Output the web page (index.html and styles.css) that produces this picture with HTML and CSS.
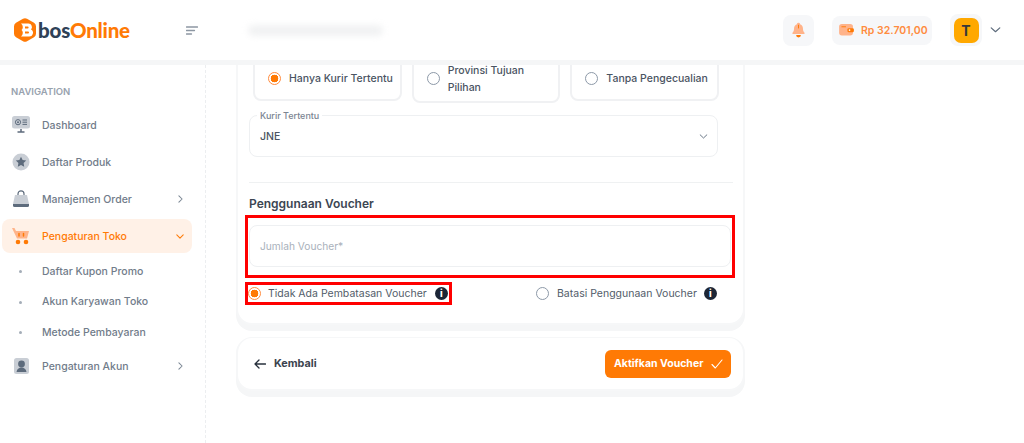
FILE: index.html
```html
<!DOCTYPE html>
<html lang="id">
<head>
<meta charset="utf-8">
<title>bosOnline</title>
<link rel="stylesheet" href="styles.css">
</head>
<body>
<header class="topbar">
  <div class="brand">
    <svg class="brand-mark" viewBox="0 0 22 24" width="22" height="24"><path d="M9 .8a4 4 0 0 1 4 0l7 4a4 4 0 0 1 2 3.400v7.600a4 4 0 0 1-2 3.400l-7 4a4 4 0 0 1-4 0l-7-4a4 4 0 0 1-2-3.400V8.200a4 4 0 0 1 2-3.400z" fill="#ff7a05"/><path fill-rule="evenodd" d="M7 5.500h7.500a3.500 3.500 0 0 1 2.500 5.900 3.800 3.800 0 0 1-2.300 7.100H7a4.500 4.500 0 0 0 1.800-3.500c0-1.200-.5-2.300-1.300-3 .8-.7 1.300-1.800 1.300-3A4.500 4.500 0 0 0 7 5.500zM11 8.500v2h2.600a1 1 0 0 0 0-2zM11 13.500v2h3a1 1 0 0 0 0-2z" fill="#fff"/></svg>
    <span class="brand-name"><span class="brand-dark">bos</span>Online</span>
  </div>
  <svg class="menu-icon" viewBox="0 0 12 9" width="12" height="9"><path d="M.5 1h11M.5 4.500h8M.5 8h5" stroke="#8d97a3" stroke-width="1.300" stroke-linecap="round"/></svg>
  <div class="redacted"></div>
  <div class="top-actions">
    <div class="tile bell">
      <svg viewBox="0 0 16 20" width="13" height="16"><path d="M8 1a2 2 0 0 1 2 1.700c2.500.8 3.600 3 3.600 5.600 0 2.700 1 4 2 5.200.5.700 0 1.500-.8 1.500H1.200c-.8 0-1.300-.8-.8-1.500 1-1.200 2-2.500 2-5.200 0-2.600 1.100-4.800 3.600-5.600A2 2 0 0 1 8 1z" fill="#ffb38a"/><path d="M5 16.300h6a3 3 0 0 1-6 0z" fill="#ff7a05"/><path d="M8 4v3.500" stroke="#ff7a05" stroke-width="1.200" stroke-linecap="round"/></svg>
    </div>
    <div class="wallet">
      <svg viewBox="0 0 16 13" width="15" height="12"><rect x="0" y="0" width="15" height="12.500" rx="3" fill="#ffb38a"/><rect x="9" y="4.500" width="7" height="4.500" rx="1.500" fill="#ff7a05"/><circle cx="11.300" cy="6.700" r=".9" fill="#fff"/><path d="M3 3h4" stroke="#ff7a05" stroke-width="1" stroke-linecap="round"/></svg>
      <span>Rp 32.701,00</span>
    </div>
    <div class="avatar-tile"><div class="avatar">T</div></div>
    <svg class="caret" viewBox="0 0 12 7" width="11" height="6"><path d="M1 1l5 4.500L11 1" fill="none" stroke="#5d6b7c" stroke-width="1.400" stroke-linecap="round" stroke-linejoin="round"/></svg>
  </div>
</header>

<div class="layout">
  <aside class="sidebar">
    <div class="nav-title">NAVIGATION</div>
    <nav class="nav">
      <a class="nav-item">
        <svg viewBox="0 0 18 18" width="18" height="18"><rect x="0" y="0" width="18" height="12.500" rx="2.500" fill="#c9ced5"/><circle cx="6" cy="6.200" r="2.600" fill="none" stroke="#5d6b7c" stroke-width="1"/><circle cx="6" cy="6.200" r="1" fill="#5d6b7c"/><path d="M10.500 4h4.500M10.500 6.200h4.500M10.500 8.400h4.500" stroke="#5d6b7c" stroke-width="1"/><path d="M9 13v2.500M5.500 16h7" stroke="#5d6b7c" stroke-width="1.500"/></svg>
        <span>Dashboard</span>
      </a>
      <a class="nav-item">
        <svg viewBox="0 0 18 18" width="18" height="18"><circle cx="9" cy="9" r="8.500" fill="#c9ced5"/><path d="M9 3.800l1.600 3.300 3.600.5-2.600 2.500.6 3.600L9 12l-3.200 1.700.6-3.600-2.600-2.500 3.600-.5z" fill="#5d6b7c"/></svg>
        <span>Daftar Produk</span>
      </a>
      <a class="nav-item">
        <svg viewBox="0 0 18 18" width="18" height="18"><path d="M6 6V3.800a3 3 0 0 1 6 0V6" fill="none" stroke="#5d6b7c" stroke-width="1.200"/><path d="M3 5h12l2 9H1z" fill="#c9ced5"/><path d="M1 14h16v1.500a1.500 1.500 0 0 1-1.500 1.500h-13A1.500 1.500 0 0 1 1 15.500z" fill="#5d6b7c"/></svg>
        <span>Manajemen Order</span>
        <svg class="nav-caret" viewBox="0 0 6 10" width="5" height="8"><path d="M1 1l4 4-4 4" fill="none" stroke="#7b8794" stroke-width="1.300" stroke-linecap="round" stroke-linejoin="round"/></svg>
      </a>
      <a class="nav-item active">
        <svg viewBox="0 0 18 18" width="18" height="18"><path d="M0 1h2.500l1.500 3h13l-2 7.500H5z" fill="#ffb48a"/><path d="M7 6.500v2.500M11.500 6.500v2.500" stroke="#ff7a05" stroke-width="1.500" stroke-linecap="round"/><circle cx="6" cy="15" r="2.300" fill="#ff7a05"/><circle cx="14" cy="15" r="2.300" fill="#ff7a05"/></svg>
        <span>Pengaturan Toko</span>
        <svg class="nav-caret wide" viewBox="0 0 10 6" width="8" height="5"><path d="M1 1l4 4 4-4" fill="none" stroke="#ff7a05" stroke-width="1.300" stroke-linecap="round" stroke-linejoin="round"/></svg>
      </a>
      <div class="subnav">
        <a class="sub-item">Daftar Kupon Promo</a>
        <a class="sub-item">Akun Karyawan Toko</a>
        <a class="sub-item">Metode Pembayaran</a>
      </div>
      <a class="nav-item">
        <svg viewBox="0 0 18 18" width="18" height="18"><rect x="2" y="1" width="15" height="16" rx="2.500" fill="#c9ced5"/><circle cx="9.500" cy="7" r="3.400" fill="#5d6b7c"/><path d="M4.500 15c.4-3 2.400-4.500 5-4.500s4.600 1.500 5 4.500z" fill="#5d6b7c"/></svg>
        <span>Pengaturan Akun</span>
        <svg class="nav-caret" viewBox="0 0 6 10" width="5" height="8"><path d="M1 1l4 4-4 4" fill="none" stroke="#7b8794" stroke-width="1.300" stroke-linecap="round" stroke-linejoin="round"/></svg>
      </a>
    </nav>
  </aside>

  <main class="main">
    <section class="card form-card">
      <div class="option-row">
        <div class="option"><span class="radio on"></span><span>Hanya Kurir Tertentu</span></div>
        <div class="option tall"><span class="radio"></span><span>Provinsi Tujuan Pilihan</span></div>
        <div class="option"><span class="radio"></span><span>Tanpa Pengecualian</span></div>
      </div>
      <div class="field select-field">
        <span class="field-label">Kurir Tertentu</span>
        <span>JNE</span>
        <svg viewBox="0 0 10 6" width="9" height="5"><path d="M1 1l4 3.800L9 1" fill="none" stroke="#5d6b7c" stroke-width="1.100" stroke-linecap="round" stroke-linejoin="round"/></svg>
      </div>
      <hr class="divider">
      <h2 class="section-title">Penggunaan Voucher</h2>
      <div class="mark mark-input">
        <div class="field input-field">Jumlah Voucher*</div>
      </div>
      <div class="limit-row">
        <div class="mark mark-radio">
          <span class="radio on"></span>
          <span>Tidak Ada Pembatasan Voucher</span>
          <span class="info">i</span>
        </div>
        <div class="limit-option">
          <span class="radio"></span>
          <span>Batasi Penggunaan Voucher</span>
          <span class="info">i</span>
        </div>
      </div>
    </section>
    <section class="card action-card">
      <a class="back">
        <svg viewBox="0 0 12 10" width="12" height="10"><path d="M11.500 5H1M5 1L1 5l4 4" fill="none" stroke="#27303c" stroke-width="1.300" stroke-linecap="round" stroke-linejoin="round"/></svg>
        <span>Kembali</span>
      </a>
      <button class="submit" type="button">
        <span>Aktifkan Voucher</span>
        <svg viewBox="0 0 12 10" width="12" height="10"><path d="M1 5.500L4.300 9 11 1" fill="none" stroke="#fff" stroke-width="1.100" stroke-linecap="round" stroke-linejoin="round"/></svg>
      </button>
    </section>
  </main>
</div>
</body>
</html>
```

FILE: styles.css
```css
* { box-sizing: border-box; }
html, body { height: 100%; }
body {
  margin: 0;
  height: 443px;
  overflow: hidden;
  background: #fff;
  color: #46505d;
  font-family: Inter, "Liberation Sans", sans-serif;
  font-size: 10.500px;
}
.topbar {
  position: relative;
  z-index: 2;
  display: flex;
  align-items: center;
  height: 65px;
  padding: 0 23px 0 14px;
  background: #fff;
  border-bottom: 5px solid #f5f6f7;
}
.brand { display: flex; align-items: center; gap: 2px; width: 172px; }
.brand-mark { flex: none; }
.brand-name {
  font-family: Lato, Inter, sans-serif;
  font-size: 20.500px;
  font-weight: 900;
  letter-spacing: -.2px;
  color: #ff7a05;
}
.brand-dark { color: #2f4257; }
.menu-icon { flex: none; }
.redacted {
  width: 135px;
  height: 11px;
  margin-left: 50px;
  background: #f1f2f3;
  border-radius: 6px;
  filter: blur(3px);
}
.top-actions { display: flex; align-items: center; margin-left: auto; }
.tile {
  display: flex;
  align-items: center;
  justify-content: center;
  width: 31px;
  height: 31px;
  border-radius: 8px;
  background: #f6f7f9;
}
.wallet {
  display: flex;
  align-items: center;
  gap: 7px;
  width: 100px;
  height: 29px;
  margin-left: 18px;
  padding-left: 7px;
  border-radius: 8px;
  background: #f6f7f9;
  color: #ff8c3f;
  font-size: 10.500px;
  font-weight: 600;
  white-space: nowrap;
}
.avatar-tile {
  display: flex;
  align-items: center;
  justify-content: center;
  width: 32px;
  height: 32px;
  margin-left: 18px;
  border-radius: 8px;
  background: #f6f7f9;
}
.avatar {
  display: flex;
  align-items: center;
  justify-content: center;
  width: 25px;
  height: 25px;
  border-radius: 7px;
  background: #ffa800;
  color: #38383a;
  font-size: 14px;
  font-weight: 700;
}
.caret { margin-left: 8px; }

.layout { display: flex; height: 378px; }
.sidebar {
  flex: none;
  width: 206px;
  padding-top: 20px;
  border-right: 1px dashed #eceef0;
}
.nav-title {
  height: 13px;
  padding-left: 11px;
  line-height: 13px;
  color: #98a2ae;
  font-size: 9.500px;
  font-weight: 600;
}
.nav { display: flex; flex-direction: column; margin-top: 10px; padding: 0 13px 0 2px; }
.nav-item {
  display: flex;
  align-items: center;
  height: 34px;
  margin-bottom: 3px;
  padding: 0 8px 0 10px;
  border-radius: 8px;
  color: #717c8a;
  font-weight: 500;
}
.nav-item > span { margin-left: 12px; }
.nav-caret { margin-left: auto; margin-right: 1px; }
.nav-caret.wide { margin-right: 0; }
.nav-item.active { background: #fff1e7; color: #ff7a05; }
.subnav { display: flex; flex-direction: column; margin: 0 0 1.500px; }
.sub-item {
  display: flex;
  align-items: center;
  height: 30.500px;
  padding-left: 40px;
  position: relative;
  color: #717c8a;
  font-weight: 500;
}
.sub-item::before {
  content: "";
  position: absolute;
  left: 17px;
  top: 14px;
  width: 3px;
  height: 3px;
  border-radius: 50%;
  background: #a4adb8;
}

.main {
  flex: none;
  width: 509px;
  margin-left: 30px;
  margin-top: -21px;
}
.card {
  background: #fff;
  border: 2px solid #f6f7f8;
  border-top-width: 0;
  border-radius: 16px;
  box-shadow: 0 6px 0 #f5f6f7;
}
.form-card {
  height: 281px;
  padding: 0 10px 0 11px;
  border-top-left-radius: 0;
  border-top-right-radius: 0;
}
.option-row { display: flex; gap: 10px; margin-left: 4px; width: 466px; align-items: flex-start; }
.option {
  display: flex;
  align-items: center;
  gap: 8px;
  flex: 1;
  height: 57px;
  padding: 11px 0 0 13px;
  border: 2px solid #f0f1f3;
  border-radius: 8px;
  color: #4a5462;
  font-weight: 500;
  line-height: 17px;
  white-space: nowrap;
}
.option.tall { height: 59px; padding-top: 10px; white-space: normal; }
.radio {
  flex: none;
  width: 13px;
  height: 13px;
  border: 1.500px solid #8d99a8;
  border-radius: 50%;
  background: #fff;
}
.radio.on {
  border-color: #ff8c3f;
  background: radial-gradient(circle, #ff7a05 0 3.600px, #fff 4.100px);
}
.field {
  display: flex;
  align-items: center;
  width: 469px;
  height: 42px;
  padding: 0 10px;
  border: 1px solid #eef0f2;
  border-radius: 8px;
  background: #fff;
}
.select-field {
  position: relative;
  margin: 12px 0 0;
  padding-right: 9px;
  color: #4a5462;
  font-weight: 500;
  justify-content: space-between;
}
.field-label {
  position: absolute;
  left: 7px;
  top: -6px;
  padding: 0 3px;
  background: #fff;
  color: #7b8592;
  font-size: 9px;
  font-weight: 500;
  line-height: 11px;
}
.divider {
  width: 484px;
  height: 1px;
  margin: 25px 0 0;
  border: 0;
  background: #eff1f2;
}
.section-title {
  margin: 13px 0 0;
  color: #3c4653;
  font-size: 12px;
  font-weight: 600;
  line-height: 16px;
}
.mark { border: 3px solid #f00; }
.mark-input { width: 490px; height: 63px; margin: 3px 0 0 -4px; padding: 7px 0 0 1px; }
.input-field { width: 482px; color: #a9b1bb; font-weight: 400; font-size: 10.200px; }
.limit-row { display: flex; align-items: center; margin: 4px 0 0 -4px; }
.mark-radio {
  display: flex;
  align-items: center;
  flex: none;
  width: 207px;
  height: 23px;
  color: #525c69;
  font-weight: 400;
  white-space: nowrap;
}
.mark-radio .radio { margin-right: 7px; }
.limit-option .radio { margin-right: 8px; }
.mark-radio .info { margin-left: 8px; }
.limit-option {
  display: flex;
  align-items: center;
  margin-left: 84px;
  color: #525c69;
  white-space: nowrap;
}
.limit-option .info { margin-left: 7px; }
.info {
  display: flex;
  align-items: center;
  justify-content: center;
  flex: none;
  width: 13px;
  height: 13px;
  border-radius: 50%;
  background: #1c2636;
  color: #fff;
  font-size: 9.500px;
  font-weight: 800;
}
.action-card {
  display: flex;
  align-items: center;
  justify-content: space-between;
  height: 54px;
  margin-top: 12px;
  padding: 0 12px 0 16px;
  border-top-width: 1px;
}
.back {
  display: flex;
  align-items: center;
  gap: 8px;
  color: #3b434e;
  font-weight: 700;
  font-size: 10.800px;
}
.submit {
  display: flex;
  align-items: center;
  justify-content: space-between;
  width: 126px;
  height: 28px;
  padding: 0 8px 0 9px;
  border: 0;
  border-radius: 6px;
  background: #ff7a05;
  color: #fff;
  font-family: inherit;
  font-size: 10.500px;
  font-weight: 700;
}
```
